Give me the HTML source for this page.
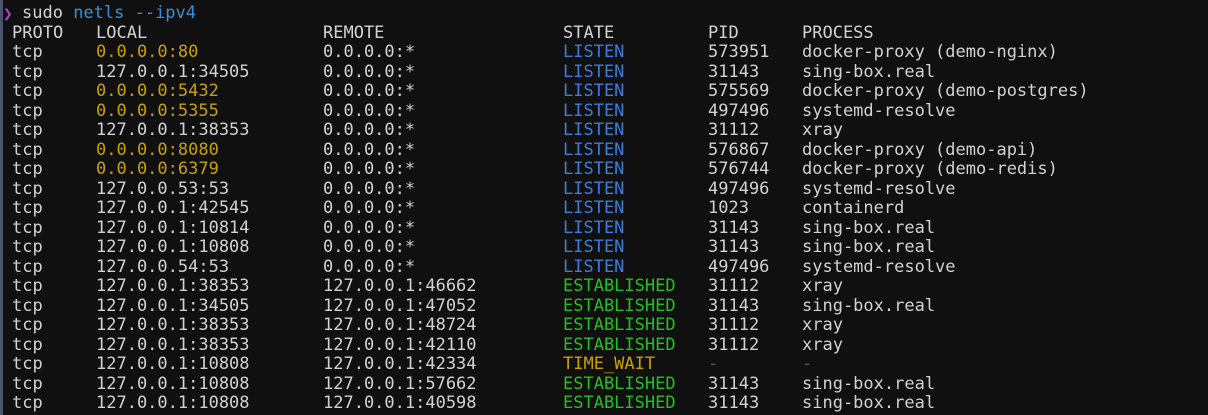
<!DOCTYPE html>
<html><head><meta charset="utf-8"><style>
html,body{margin:0;padding:0;background:#101010;width:1208px;height:415px;overflow:hidden}
body{font-family:"DejaVu Sans Mono","Liberation Mono",monospace;font-size:17px;color:#d2d2d2;position:relative}
.bar{position:absolute;left:0;top:0;width:3px;height:415px;background:#4a5270}
.r{position:absolute;left:0;height:19.5px;line-height:19.5px;white-space:pre;width:1208px}
.r span{position:absolute;top:0}
.c1{left:12px}.c2{left:96px}.c3{left:323px}.c4{left:563px}.c5{left:708px}.c6{left:802px}
.y{color:#c9a106}.b{color:#3b7ddd}.g{color:#22c022}.dim{color:#555}
</style></head><body>
<div class="bar"></div>
<div class="r" style="top:4px"><span style="left:3px;color:#b040d0;font-size:16px">❯</span><span style="left:22px">sudo <span style="position:static;color:#3a8fd8">netls --ipv4</span></span></div>
<div class="r" style="top:23.5px"><span class="c1">PROTO</span><span class="c2">LOCAL</span><span class="c3">REMOTE</span><span class="c4">STATE</span><span class="c5">PID</span><span class="c6">PROCESS</span></div>
<div class="r" style="top:43px"><span class="c1">tcp</span><span class="c2 y">0.0.0.0:80</span><span class="c3">0.0.0.0:*</span><span class="c4 b">LISTEN</span><span class="c5">573951</span><span class="c6">docker-proxy (demo-nginx)</span></div>
<div class="r" style="top:62.5px"><span class="c1">tcp</span><span class="c2">127.0.0.1:34505</span><span class="c3">0.0.0.0:*</span><span class="c4 b">LISTEN</span><span class="c5">31143</span><span class="c6">sing-box.real</span></div>
<div class="r" style="top:82px"><span class="c1">tcp</span><span class="c2 y">0.0.0.0:5432</span><span class="c3">0.0.0.0:*</span><span class="c4 b">LISTEN</span><span class="c5">575569</span><span class="c6">docker-proxy (demo-postgres)</span></div>
<div class="r" style="top:101.5px"><span class="c1">tcp</span><span class="c2 y">0.0.0.0:5355</span><span class="c3">0.0.0.0:*</span><span class="c4 b">LISTEN</span><span class="c5">497496</span><span class="c6">systemd-resolve</span></div>
<div class="r" style="top:121px"><span class="c1">tcp</span><span class="c2">127.0.0.1:38353</span><span class="c3">0.0.0.0:*</span><span class="c4 b">LISTEN</span><span class="c5">31112</span><span class="c6">xray</span></div>
<div class="r" style="top:140.5px"><span class="c1">tcp</span><span class="c2 y">0.0.0.0:8080</span><span class="c3">0.0.0.0:*</span><span class="c4 b">LISTEN</span><span class="c5">576867</span><span class="c6">docker-proxy (demo-api)</span></div>
<div class="r" style="top:160px"><span class="c1">tcp</span><span class="c2 y">0.0.0.0:6379</span><span class="c3">0.0.0.0:*</span><span class="c4 b">LISTEN</span><span class="c5">576744</span><span class="c6">docker-proxy (demo-redis)</span></div>
<div class="r" style="top:179.5px"><span class="c1">tcp</span><span class="c2">127.0.0.53:53</span><span class="c3">0.0.0.0:*</span><span class="c4 b">LISTEN</span><span class="c5">497496</span><span class="c6">systemd-resolve</span></div>
<div class="r" style="top:199px"><span class="c1">tcp</span><span class="c2">127.0.0.1:42545</span><span class="c3">0.0.0.0:*</span><span class="c4 b">LISTEN</span><span class="c5">1023</span><span class="c6">containerd</span></div>
<div class="r" style="top:218.5px"><span class="c1">tcp</span><span class="c2">127.0.0.1:10814</span><span class="c3">0.0.0.0:*</span><span class="c4 b">LISTEN</span><span class="c5">31143</span><span class="c6">sing-box.real</span></div>
<div class="r" style="top:238px"><span class="c1">tcp</span><span class="c2">127.0.0.1:10808</span><span class="c3">0.0.0.0:*</span><span class="c4 b">LISTEN</span><span class="c5">31143</span><span class="c6">sing-box.real</span></div>
<div class="r" style="top:257.5px"><span class="c1">tcp</span><span class="c2">127.0.0.54:53</span><span class="c3">0.0.0.0:*</span><span class="c4 b">LISTEN</span><span class="c5">497496</span><span class="c6">systemd-resolve</span></div>
<div class="r" style="top:277px"><span class="c1">tcp</span><span class="c2">127.0.0.1:38353</span><span class="c3">127.0.0.1:46662</span><span class="c4 g">ESTABLISHED</span><span class="c5">31112</span><span class="c6">xray</span></div>
<div class="r" style="top:296.5px"><span class="c1">tcp</span><span class="c2">127.0.0.1:34505</span><span class="c3">127.0.0.1:47052</span><span class="c4 g">ESTABLISHED</span><span class="c5">31143</span><span class="c6">sing-box.real</span></div>
<div class="r" style="top:316px"><span class="c1">tcp</span><span class="c2">127.0.0.1:38353</span><span class="c3">127.0.0.1:48724</span><span class="c4 g">ESTABLISHED</span><span class="c5">31112</span><span class="c6">xray</span></div>
<div class="r" style="top:335.5px"><span class="c1">tcp</span><span class="c2">127.0.0.1:38353</span><span class="c3">127.0.0.1:42110</span><span class="c4 g">ESTABLISHED</span><span class="c5">31112</span><span class="c6">xray</span></div>
<div class="r" style="top:355px"><span class="c1">tcp</span><span class="c2">127.0.0.1:10808</span><span class="c3">127.0.0.1:42334</span><span class="c4 y">TIME_WAIT</span><span class="c5 dim">-</span><span class="c6 dim">-</span></div>
<div class="r" style="top:374.5px"><span class="c1">tcp</span><span class="c2">127.0.0.1:10808</span><span class="c3">127.0.0.1:57662</span><span class="c4 g">ESTABLISHED</span><span class="c5">31143</span><span class="c6">sing-box.real</span></div>
<div class="r" style="top:394px"><span class="c1">tcp</span><span class="c2">127.0.0.1:10808</span><span class="c3">127.0.0.1:40598</span><span class="c4 g">ESTABLISHED</span><span class="c5">31143</span><span class="c6">sing-box.real</span></div>
</body></html>
